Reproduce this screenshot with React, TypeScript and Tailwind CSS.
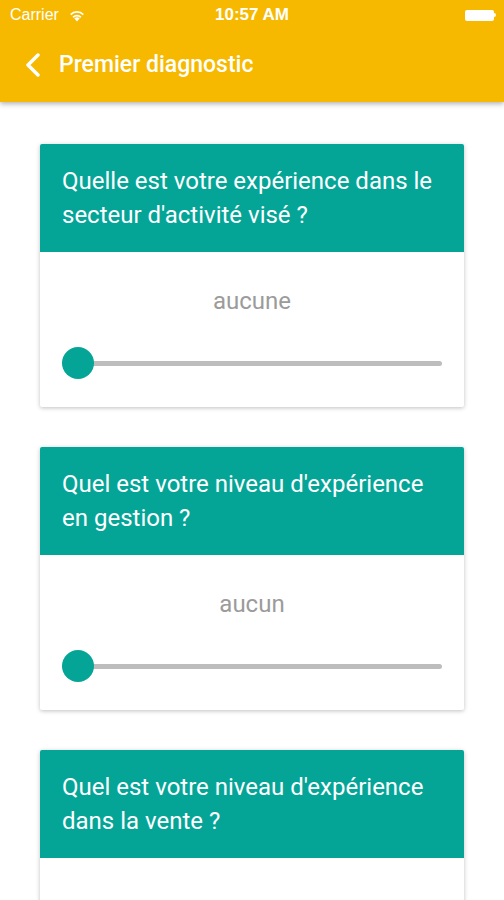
const questions = [
  { id: "q1", title: "Quelle est votre expérience dans le secteur d'activité visé ?", value: "aucune" },
  { id: "q2", title: "Quel est votre niveau d'expérience en gestion ?", value: "aucun" },
  { id: "q3", title: "Quel est votre niveau d'expérience dans la vente ?", value: "aucun" },
];

const StatusBar = () => (
  <div className="relative flex items-center h-[30px] pl-[10px] pr-[8px] text-white text-[16px] font-['Liberation_Sans',sans-serif]">
    <span>Carrier</span>
    <svg className="ml-[9px]" width="18" height="13" viewBox="0 0 16 12" fill="white">
      <path d="M8 11.5 L5.6 8.8 A3.4 3.4 0 0 1 10.4 8.8 Z" />
      <path d="M3.9 7 A5.8 5.8 0 0 1 12.1 7 L11 8.2 A4.2 4.2 0 0 0 5 8.2 Z" />
      <path d="M1.6 4.6 A9 9 0 0 1 14.4 4.6 L13.3 5.8 A7.4 7.4 0 0 0 2.7 5.8 Z" />
    </svg>
    <span className="absolute left-1/2 -translate-x-1/2 text-[17px] font-bold">10:57 AM</span>
    <div className="ml-auto flex items-center">
      <div className="w-[29px] h-[11px] bg-white rounded-[2px]" />
      <div className="w-[2px] h-[4px] bg-white rounded-r-sm" />
    </div>
  </div>
);

const QuestionCard = ({ title, value }: { title: string; value: string }) => (
  <div className="bg-white rounded-[2px] shadow-[0_1px_4px_rgba(0,0,0,0.25)] overflow-hidden">
    <div className="bg-[#04a597] text-white text-[24px] leading-[34px] px-[22px] pt-[20px] pb-[20px]">
      {title}
    </div>
    <div className="px-[22px] pt-[34px] pb-[28px]">
      <p className="text-center text-[#9b9b9b] text-[24px] leading-[30px]">{value}</p>
      <div className="relative mt-[31px] h-[32px] flex items-center">
        <div className="w-full h-[5px] rounded-full bg-[#bdbdbd]" />
        <div className="absolute left-0 top-0 w-[32px] h-[32px] rounded-full bg-[#04a597]" />
      </div>
    </div>
  </div>
);

const App: React.FC = () => {
  return (
    <div className="w-[504px] h-[900px] overflow-hidden bg-white font-['Roboto',sans-serif]">
      <div className="bg-[#f7b900] shadow-[0_2px_5px_rgba(0,0,0,0.3)] relative z-10">
        <StatusBar />
        <div className="flex items-center h-[72px] pb-[2px] pl-[25px] text-white">
          <svg width="16" height="24" viewBox="0 0 16 24" fill="none" stroke="white" strokeWidth="3.5" strokeLinecap="round" strokeLinejoin="round">
            <polyline points="13,2 3,12 13,22" />
          </svg>
          <span className="ml-[18px] text-[23px] font-medium">Premier diagnostic</span>
        </div>
      </div>

      <div className="px-[40px] pt-[42px] flex flex-col gap-[40px]">
        {questions.map((q) => (
          <QuestionCard key={q.id} title={q.title} value={q.value} />
        ))}
      </div>
    </div>
  );
};

export default App;
